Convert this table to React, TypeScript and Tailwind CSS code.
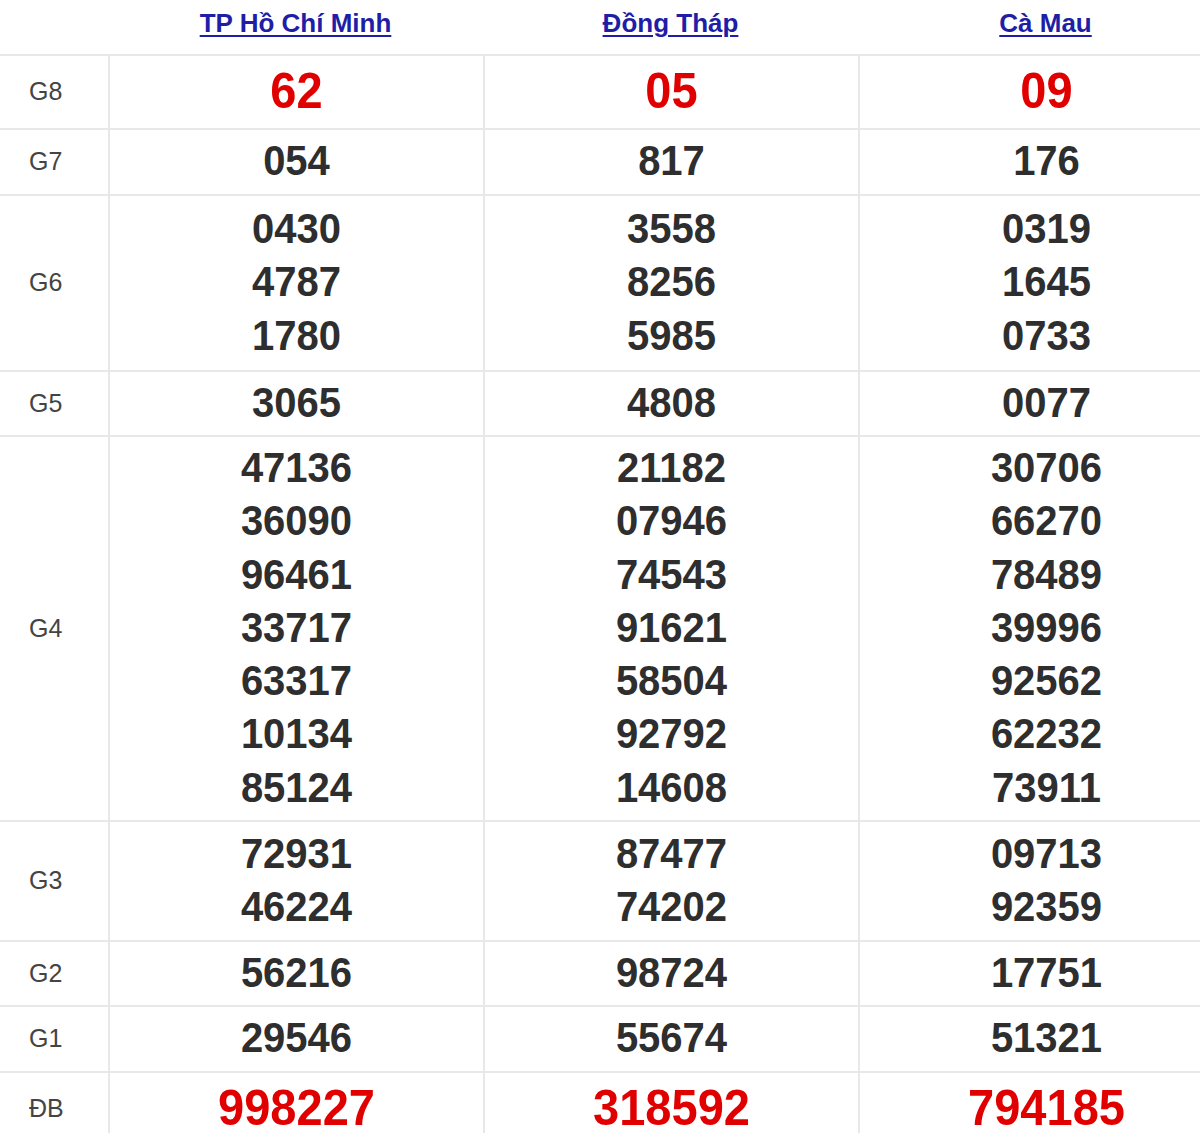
import React from "react";

type Row = { label: string; h: string; red?: boolean; vals: string[][] };

const rows: Row[] = [
  { label: "G8", h: "h-[74px]", red: true, vals: [["62"], ["05"], ["09"]] },
  { label: "G7", h: "h-[66px]", vals: [["054"], ["817"], ["176"]] },
  {
    label: "G6",
    h: "h-[176px]",
    vals: [
      ["0430", "4787", "1780"],
      ["3558", "8256", "5985"],
      ["0319", "1645", "0733"],
    ],
  },
  { label: "G5", h: "h-[65px]", vals: [["3065"], ["4808"], ["0077"]] },
  {
    label: "G4",
    h: "h-[385px]",
    vals: [
      ["47136", "36090", "96461", "33717", "63317", "10134", "85124"],
      ["21182", "07946", "74543", "91621", "58504", "92792", "14608"],
      ["30706", "66270", "78489", "39996", "92562", "62232", "73911"],
    ],
  },
  {
    label: "G3",
    h: "h-[120px]",
    vals: [
      ["72931", "46224"],
      ["87477", "74202"],
      ["09713", "92359"],
    ],
  },
  { label: "G2", h: "h-[65px]", vals: [["56216"], ["98724"], ["17751"]] },
  { label: "G1", h: "h-[66px]", vals: [["29546"], ["55674"], ["51321"]] },
  { label: "ĐB", h: "h-[74px]", red: true, vals: [["998227"], ["318592"], ["794185"]] },
];

const provinces = ["TP Hồ Chí Minh", "Đồng Tháp", "Cà Mau"];

export default function App() {
  return (
    <div
      className="w-[1200px] h-[1133px] overflow-hidden bg-white"
      style={{ fontFamily: '"Liberation Sans", Arial, sans-serif' }}
    >
      <div className="w-[1234px]">
        <div className="grid grid-cols-[108px_375px_375px_375px] h-[54px]">
          <div />
          {provinces.map((p) => (
            <div key={p} className="flex items-start justify-center pt-[5px]">
              <a
                href="#"
                className="text-[26px] font-bold text-[#1e1ea6] underline underline-offset-[3px] decoration-[2px] leading-[36px]"
              >
                {p}
              </a>
            </div>
          ))}
        </div>
        {rows.map((r) => (
          <div
            key={r.label}
            className={`grid grid-cols-[108px_375px_375px_375px] border-t-2 border-[#e8e8e8] ${r.h}`}
          >
            <div className="flex items-center pl-[29px] text-[25px] text-[#444444]">
              <span className="scale-y-105">{r.label}</span>
            </div>
            {r.vals.map((col, i) => (
              <div
                key={i}
                className="flex flex-col items-center justify-center border-l-2 border-[#e8e8e8] pb-[2px]"
              >
                {col.map((v, j) => (
                  <div
                    key={j}
                    className={
                      r.red
                        ? "text-[47px] font-bold text-[#e10000] leading-[54px] scale-y-105"
                        : "text-[40px] font-bold text-[#2e2e2e] leading-[53.3px] scale-y-105"
                    }
                  >
                    {v}
                  </div>
                ))}
              </div>
            ))}
          </div>
        ))}
      </div>
    </div>
  );
}
